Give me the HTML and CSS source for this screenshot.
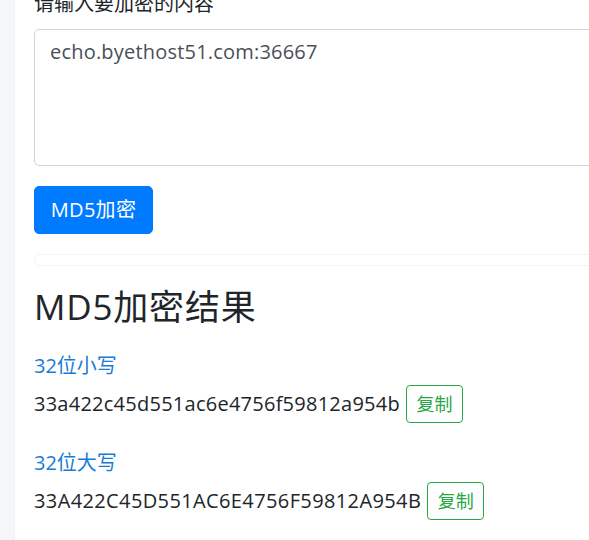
FILE: index.html
```html
<!DOCTYPE html>
<html lang="zh-CN">
<head>
<meta charset="utf-8">
<title>MD5加密</title>
<link rel="stylesheet" href="styles.css">
</head>
<body>
<div class="layout">
  <aside class="sidebar"></aside>
  <main class="content">
    <div class="form-group">
      <label class="label" for="src">请输入要加密的内容</label>
      <textarea id="src" class="textarea" rows="4">echo.byethost51.com:36667</textarea>
    </div>
    <button class="btn-primary" type="button">MD5加密</button>
    <div class="divider"></div>
    <h3 class="title">MD5加密结果</h3>
    <div class="result">
      <div class="result-label">32位小写</div>
      <div class="result-row">
        <span class="hash">33a422c45d551ac6e4756f59812a954b</span>
        <button class="btn-copy" type="button">复制</button>
      </div>
    </div>
    <div class="result">
      <div class="result-label">32位大写</div>
      <div class="result-row">
        <span class="hash hash-upper">33A422C45D551AC6E4756F59812A954B</span>
        <button class="btn-copy" type="button">复制</button>
      </div>
    </div>
  </main>
</div>
</body>
</html>
```

FILE: styles.css
```css
* { box-sizing: border-box; }
html, body {
  margin: 0;
  padding: 0;
  background: #fff;
  overflow: hidden;
}
body {
  font-family: "Open Sans", "Noto Sans CJK SC", sans-serif;
  font-size: 20px;
  color: #212529;
  line-height: 1.5;
}
.layout {
  display: flex;
  height: 540px;
}
.sidebar {
  width: 15px;
  flex: none;
  background: linear-gradient(to right, #f5f6f8 0, #f5f6f8 13px, #eef0f2 15px);
}
.content {
  flex: none;
  width: 700px;
  padding-left: 19px;
  margin-top: -11px;
}
.form-group {
  margin-bottom: 20px;
}
.label {
  display: block;
  margin-bottom: 10px;
  line-height: 30px;
}
.textarea {
  display: block;
  width: 100%;
  height: 137px;
  padding: 7px 15px;
  font: inherit;
  line-height: 30px;
  letter-spacing: 0.2px;
  color: #495057;
  border: 1px solid #ced4da;
  border-radius: 5px;
  resize: none;
  background: #fff;
}
.btn-primary {
  display: block;
  height: 48px;
  width: 119px;
  padding: 0 10px;
  font: inherit;
  letter-spacing: 0.3px;
  color: #fff;
  background: #007bff;
  border: 1px solid #007bff;
  border-radius: 5px;
}
.divider {
  margin-top: 20px;
  height: 12px;
  border: 1px solid #f3f4f5;
  border-radius: 6px;
}
.title {
  margin: 20px 0 23px;
  font-size: 35px;
  font-weight: 400;
  line-height: 42px;
  letter-spacing: 0.8px;
}
.result {
  margin-bottom: 25px;
}
.result-label {
  color: #1a7bd6;
  line-height: 30px;
  margin-bottom: 4px;
}
.result-row {
  display: flex;
  align-items: center;
  gap: 6px;
}
.hash {
  line-height: 30px;
  letter-spacing: 0.25px;
}
.hash-upper {
  letter-spacing: 0.38px;
}
.btn-copy {
  height: 38px;
  width: 57px;
  padding: 0 4px;
  font: inherit;
  font-size: 18px;
  color: #28a745;
  background: #fff;
  border: 1px solid #28a745;
  border-radius: 4px;
}
```
